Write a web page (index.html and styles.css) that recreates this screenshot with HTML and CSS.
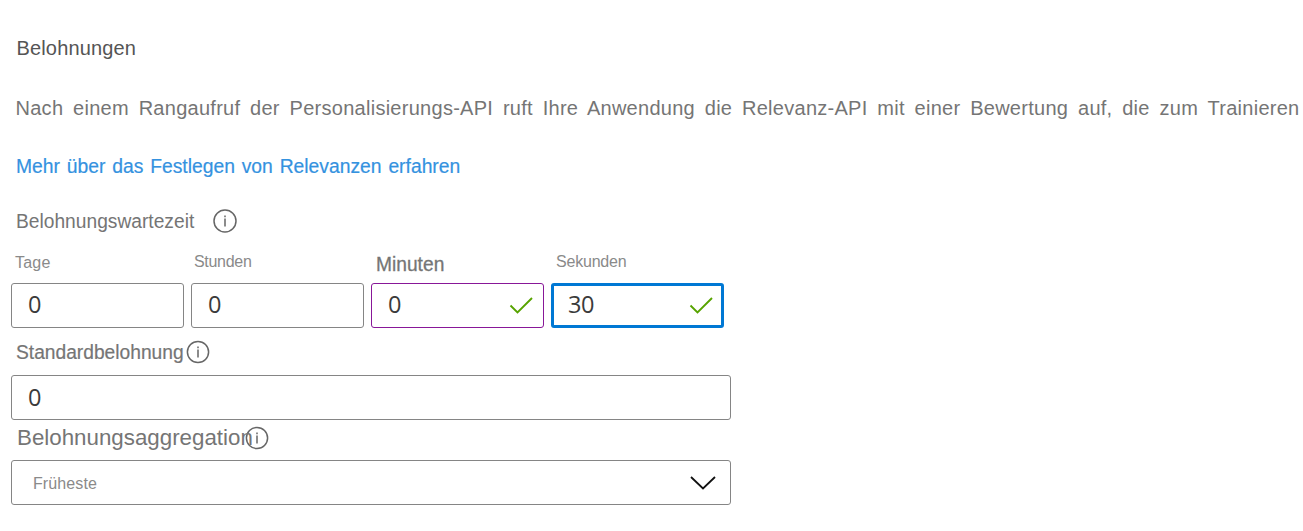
FILE: index.html
```html
<!DOCTYPE html>
<html lang="de">
<head>
<meta charset="utf-8">
<title>Belohnungen</title>
<link rel="stylesheet" href="styles.css">
</head>
<body>
<main class="page">
  <h1 class="title">Belohnungen</h1>
  <p class="intro">Nach einem Rangaufruf der Personalisierungs-API ruft Ihre Anwendung die Relevanz-API mit einer Bewertung auf, die zum Trainieren</p>
  <a class="link"><span>Mehr über das Festlegen von Relevanzen erfahren</span></a>
  <div class="label wait"><span class="text">Belohnungswartezeit</span>
    <svg class="info" viewBox="0 0 24 24"><circle cx="12" cy="12" r="11"/><path d="M12 9.5v8M12 6.5v1.7"/></svg>
  </div>
  <div class="times">
    <div class="field"><label class="small tage">Tage</label><div class="box"><span>0</span></div></div>
    <div class="field"><label class="small">Stunden</label><div class="box"><span>0</span></div></div>
    <div class="field"><label class="minutes"><span>Minuten</span></label><div class="box visited"><span>0</span><svg class="check" viewBox="0 0 24 18"><path d="M1.5 8.5l7 7L23 1"/></svg></div></div>
    <div class="field"><label class="small seconds">Sekunden</label><div class="box focused"><span>30</span><svg class="check" viewBox="0 0 24 18"><path d="M1.5 8.5l7 7L23 1"/></svg></div></div>
  </div>
  <div class="label default"><span class="text">Standardbelohnung</span>
    <svg class="info" viewBox="0 0 24 24"><circle cx="12" cy="12" r="10.6"/><path d="M12 9.5v8M12 6.5v1.7"/></svg>
  </div>
  <div class="box wide"><span>0</span></div>
  <div class="label aggregation"><span class="text">Belohnungsaggregation</span>
    <svg class="info" viewBox="0 0 24 24"><circle cx="12" cy="12" r="10.6"/><path d="M12 9.5v8M12 6.5v1.7"/></svg>
  </div>
  <div class="box wide select"><span class="option">Früheste</span><svg class="chevron" viewBox="0 0 26 14"><path d="M1 1l12 11.5L25 1"/></svg></div>
</main>
</body>
</html>
```
FILE: styles.css
```css
* { box-sizing: border-box; }
body { margin: 0; background: #fff; color: #757575; font-family: "Liberation Sans", Arial, sans-serif; font-size: 20px; overflow: hidden; }
.page { display: flex; flex-direction: column; padding: 36px 0 0 11px; }
.title { margin: 0 0 0 5.5px; height: 24px; line-height: 24px; font-size: 20px; font-weight: 400; letter-spacing: .15px; color: #555; }
.intro { margin: 36px 0 0 4.5px; width: 1284px; height: 24px; line-height: 24px; letter-spacing: .27px; text-align: justify; text-align-last: justify; }
.link { margin: 34px 0 0 5px; height: 24px; line-height: 24px; color: #3492df; white-space: nowrap; -webkit-text-stroke: .2px; word-spacing: 1.5px; }
.link span { display: inline-block; transform: scaleX(.965); transform-origin: left; }
.label { display: flex; align-items: center; height: 24px; white-space: nowrap; }
.text, .minutes span { display: inline-block; transform: scaleX(.96); transform-origin: left; }
.text { line-height: 24px; }
.info { flex: none; width: 24px; height: 24px; fill: none; stroke: #666; stroke-width: 1.5; }
.wait { margin: 31px 0 0 5px; }
.wait .text { width: 196.5px; }
.times { display: flex; gap: 7px; margin-top: 17px; }
.field { display: flex; flex-direction: column; width: 173px; }
.field label { height: 33px; padding: 2px 0 0 4px; line-height: 24px; }
.field .small { padding-left: 3px; font-size: 16px; line-height: 19px; letter-spacing: -.3px; color: #8a8a8a; }
.field .tage { padding-left: 4px; line-height: 21px; letter-spacing: .2px; }
.field .seconds { padding-left: 5px; letter-spacing: -.2px; }
.field .minutes { padding-left: 5px; -webkit-text-stroke: .3px; }
.box { display: flex; align-items: center; justify-content: space-between; height: 45px; padding: 0 10px 0 16px; border: 1px solid #858585; border-radius: 3px; color: #3b3b3b; font-family: "Open Sans", "Noto Sans", sans-serif; font-size: 23.5px; line-height: 32px; letter-spacing: -.4px; }
.box span { padding-bottom: 3px; }
.wide span { padding-bottom: 2px; }
.visited { border-color: #881798; }
.focused { border: 3px solid #0078d4; padding: 0 8px 0 14px; }
.check { width: 24px; height: 18px; fill: none; stroke: #57a300; stroke-width: 1.9; }
.default { margin: 12px 0 0 5px; }
.default .text { width: 170px; -webkit-text-stroke: .2px; }
.wide { width: 720px; }
.default + .wide { margin-top: 11px; }
.aggregation { margin: 6px 0 0 6px; font-size: 22.5px; }
.aggregation .text { width: 228px; transform: scaleX(.992); }
.select { margin-top: 10px; padding: 0 14px 0 21px; }
.box .option { padding: 2px 0 0; font-family: "Liberation Sans", Arial, sans-serif; font-size: 16px; letter-spacing: .1px; color: #8a8a8a; }
.chevron { width: 26px; height: 14px; fill: none; stroke: #111; stroke-width: 1.8; }
```
